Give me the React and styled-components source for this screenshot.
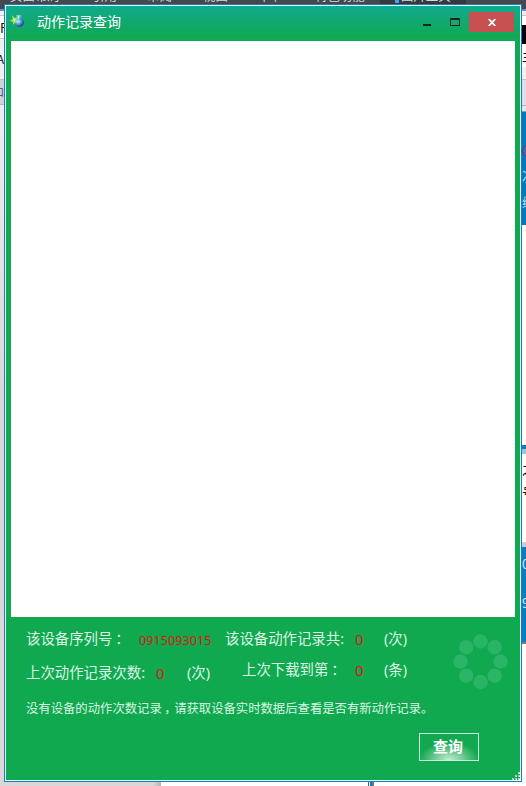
import React from "react";
import styled, { createGlobalStyle } from "styled-components";

const Global = createGlobalStyle`
  *{box-sizing:border-box}
  html,body{margin:0;padding:0;overflow:hidden}
  body{font-family:"Noto Sans","Noto Sans CJK SC",sans-serif}
`;
const Desktop = styled.div`
  width:526px;height:786px;overflow:hidden;display:grid;
  grid-template-columns:4px 518px 4px;grid-template-rows:4px 778px 4px;background:#fff;
`;
const TopStrip = styled.div`
  grid-column:1 / 4;height:4px;overflow:hidden;display:flex;background:#44484f;
`;
const Tab = styled.span`
  flex:none;width:${p => p.$w}px;height:4px;padding-left:${p => p.$pad || 0}px;
  background:${p => p.$bg || "transparent"};
  display:flex;align-items:flex-end;overflow:hidden;white-space:nowrap;
  font:12.4px/15px "Noto Sans CJK SC",sans-serif;color:#d5d9de;
`;
const TabDot = styled.i`flex:none;width:4px;height:3px;align-self:flex-start;background:#3aa8f5;margin-right:2px;`;
const Side = styled.div`display:flex;flex-direction:column;overflow:hidden;`;
const Strip = styled.div`
  flex:none;height:${p => p.$h}px;background:${p => p.$bg};color:${p => p.$c || "#111"};
  border-bottom:${p => p.$line ? `1px solid ${p.$line}` : "0"};
  overflow:hidden;white-space:nowrap;display:flex;align-items:center;
  justify-content:${p => p.$end ? "flex-end" : "flex-start"};
  font:${p => p.$size || 13}px/1 "Noto Sans CJK SC",sans-serif;
`;
const BottomStrip = styled.div`
  grid-column:1 / 4;height:4px;
  background:linear-gradient(90deg,#d7d7d9 0 153px,#b4b4b8 161px,#fff 161px 368px,#17737b 368px 369px,#fff 369px 370px,#1079c0 370px 372px,#777 372px 374px,#fff 374px);
`;
const Window = styled.section`
  border:1px solid #0589bd;padding:1px;background:#fff;
`;
const Frame = styled.div`
  height:774px;background:#10a94f;display:flex;flex-direction:column;
`;
const TitleBar = styled.header`
  height:35px;flex:none;padding-left:4px;display:flex;
  background:linear-gradient(180deg,#11aa8e 0,#10a850 32px,#12a766 32px,#10a950 35px);
`;
const AppIcon = styled.svg`width:16px;height:16px;margin-top:7px;flex:none;`;
const Title = styled.h1`
  margin:4px 0 0 11px;font:400 14px/22px "Noto Sans CJK SC",sans-serif;color:#fff;flex:1;
`;
const Control = styled.button`
  border:0;padding:0;background:${p => p.$close ? "#c75050" : "transparent"};
  width:${p => p.$close ? 45 : 28}px;height:20px;margin-top:6px;
  margin-right:${p => p.$close ? 6 : 0}px;
  display:flex;align-items:center;justify-content:center;
`;
const Records = styled.div`height:576px;flex:none;margin:0 5px;background:#fff;`;
const Footer = styled.footer`
  height:163px;padding-left:20px;display:grid;grid-template-columns:417px 1fr;
  grid-template-rows:76px 30px 57px;
`;
const Stats = styled.div`display:flex;flex-direction:column;`;
const Row = styled.div`display:flex;height:${p => p.$h}px;align-items:flex-start;`;
const Text = styled.span`
  flex:none;white-space:nowrap;width:${p => p.$w}px;padding-top:${p => p.$top}px;
  color:${p => p.$red ? "#d71a14" : "#dcf4e5"};
  font-size:${p => p.$size || 14.4}px;line-height:22px;
`;
const Mark = styled.span`display:inline-block;width:1em;text-indent:.2em;`;
const Spinner = styled.svg`width:56px;height:56px;margin:17px 0 0 10px;`;
const Message = styled.p`
  grid-column:1 / 3;margin:3px 0 0;font:12.35px/24px "Noto Sans CJK SC",sans-serif;color:#dcf4e5;
`;
const Actions = styled.div`
  grid-column:1 / 3;display:flex;align-items:flex-start;padding:10px 0 0 393px;
`;
const Query = styled.button`
  width:60px;height:28px;padding:0 2px 2px 0;border:1px solid #c9f0da;
  background:radial-gradient(ellipse 30px 18px at 50% 100%,#c7ebd6 0,#71ca94 48%,transparent 100%);
  color:#fff;font:700 15px/24px "Noto Sans CJK SC",sans-serif;
`;
const Grip = styled.svg`width:8px;height:8px;margin:39px 0 0 auto;`;

const dots = [[27.5,7.5],[41.7,13.2],[47.5,27.5],[41.7,41.7],[27.5,48],[13.2,41.7],[7.5,27.5],[13.2,13.2]];
const gripDots = [[6,0],[3,3],[6,3],[0,6],[3,6],[6,6]];

export default function App() {
  return <><Global /><Desktop>
    <TopStrip>
      <Tab $w={92} $pad={10}>页面布局</Tab><Tab $w={55}>引用</Tab><Tab $w={56}>审阅</Tab>
      <Tab $w={55}>视图</Tab><Tab $w={57}>章节</Tab><Tab $w={65}>特色功能</Tab>
      <Tab $w={86} $pad={15} $bg="#363a40"><TabDot />图片工具</Tab>
    </TopStrip>
    <Side>
      <Strip $h={5} $bg="#44484f" /><Strip $h={2} $bg="#5592e6" /><Strip $h={5} $bg="#eef0f4" $line="#c4c7cb" />
      <Strip $h={23} $bg="#fff" $line="#c4c7cb">F</Strip>
      <Strip $h={41} $bg="#eef0f4" $line="#bfc3ca" $end $size={12}>A</Strip>
      <Strip $h={25} $bg="#cdd2db" $line="#b0b5bd" $c="#334d79" $end $size={10}>口</Strip>
      <Strip $h={677} $bg="linear-gradient(180deg,#ebedf2 0,#d7d7d9 300px)" />
    </Side>
    <Window><Frame>
      <TitleBar>
        <AppIcon viewBox="0 0 16 16">
          <defs><radialGradient id="flask" cx=".35" cy=".35" r=".7"><stop offset="0" stopColor="#c3f0ff"/><stop offset=".45" stopColor="#5aa5e4"/><stop offset="1" stopColor="#142f93"/></radialGradient></defs>
          <path d="M6 2.2h5.2v1.2h-1V6H7.4V3.4H6z" fill="#8fcbe6"/>
          <ellipse cx="9.3" cy="9.6" rx="4.7" ry="4.2" fill="url(#flask)"/>
          <path d="M2 2l2.6 3 3-.8-1.2 3 1.8 2.6-3.2-.5L3.2 12 3 9 0 7.6l2.8-1.3z" fill="#a9e36b"/>
          <path d="M3 5l2 1.2-.5 2z" fill="#f0fac0"/>
          <path d="M8.3 2.6v3.2" stroke="#e2faff" strokeWidth="1"/>
        </AppIcon>
        <Title>动作记录查询</Title>
        <Control aria-label="最小化"><svg width="8" height="12"><path d="M0 8h8v2H0z" fill="#222"/></svg></Control>
        <Control aria-label="最大化"><svg width="10" height="8"><path d="M0 0h10v8H0zM1 2v5h8V2z" fill="#222" fillRule="evenodd"/></svg></Control>
        <Control $close aria-label="关闭"><svg width="8" height="7"><path d="M.7 0l6.6 7M7.3 0L.7 7" stroke="#fff" strokeWidth="1.8"/></svg></Control>
      </TitleBar>
      <Records />
      <Footer>
        <Stats>
          <Row $h={34}>
            <Text $w={113} $top={11}>该设备序列号<Mark>：</Mark></Text><Text $w={86} $top={12} $red $size={12.7}>0915093015</Text>
            <Text $w={130} $top={11}>该设备动作记录共:</Text><Text $w={29} $top={11} $red $size={15}>0</Text><Text $w={30} $top={11}>(次)</Text>
          </Row>
          <Row $h={36}>
            <Text $w={130} $top={11}>上次动作记录次数:</Text><Text $w={31} $top={11} $red $size={15}>0</Text><Text $w={55} $top={11}>(次)</Text>
            <Text $w={113} $top={8}>上次下载到第<Mark>：</Mark></Text><Text $w={29} $top={8} $red $size={15}>0</Text><Text $w={30} $top={8}>(条)</Text>
          </Row>
        </Stats>
        <Spinner viewBox="0 0 56 56">{dots.map(([x,y]) => <circle key={`${x}-${y}`} cx={x} cy={y} r="7.2" fill="#2ab465"/>)}</Spinner>
        <Message>没有设备的动作次数记录<Mark>，</Mark>请获取设备实时数据后查看是否有新动作记录。</Message>
        <Actions><Query>查询</Query><Grip viewBox="0 0 8 8">{gripDots.map(([x,y]) => <g key={`${x}-${y}`}><rect x={x} y={y} width="2" height="2" fill="#b9c9bf"/><rect x={x + 1} y={y + 1} width="1" height="1" fill="#fff"/></g>)}</Grip></Actions>
      </Footer>
    </Frame></Window>
    <Side>
      <Strip $h={5} $bg="#44484f" /><Strip $h={2} $bg="#5592e6" /><Strip $h={5} $bg="#e9edf3" $line="#bfc3ca" />
      <Strip $h={9} $bg="#fff" /><Strip $h={19} $bg="#02030b" /><Strip $h={23} $bg="#fff">主</Strip>
      <Strip $h={13} $bg="#eef0f4" $line="#bfc3ca" /><Strip $h={26} $bg="#dddfe7" $line="#b0b5bd" />
      <Strip $h={6} $bg="#d8edf2" $line="#72a8b0" />
      <Strip $h={26} $bg="#0876be" /><Strip $h={24} $bg="#0876be" $c="#b52863">C</Strip>
      <Strip $h={27} $bg="#0876be" $c="#a9def4">次</Strip><Strip $h={24} $bg="#0876be" $c="#a9def4">编</Strip><Strip $h={12} $bg="#0876be" />
      <Strip $h={220} $bg="#fff" /><Strip $h={4} $bg="#0d7ac2" /><Strip $h={5} $bg="#8fc9e2" />
      <Strip $h={28} $bg="#fff">之</Strip><Strip $h={18} $bg="#fff">号</Strip><Strip $h={42} $bg="#fff" />
      <Strip $h={5} $bg="#c7cddd" /><Strip $h={32} $bg="#0d7ac2" $c="#c9edfa">0</Strip><Strip $h={46} $bg="#0d7ac2" $c="#c9edfa">9</Strip>
      <Strip $h={17} $bg="#0d7ac2" /><Strip $h={2} $bg="#777b80" /><Strip $h={150} $bg="#fff" />
    </Side>
    <BottomStrip />
  </Desktop></>;
}
